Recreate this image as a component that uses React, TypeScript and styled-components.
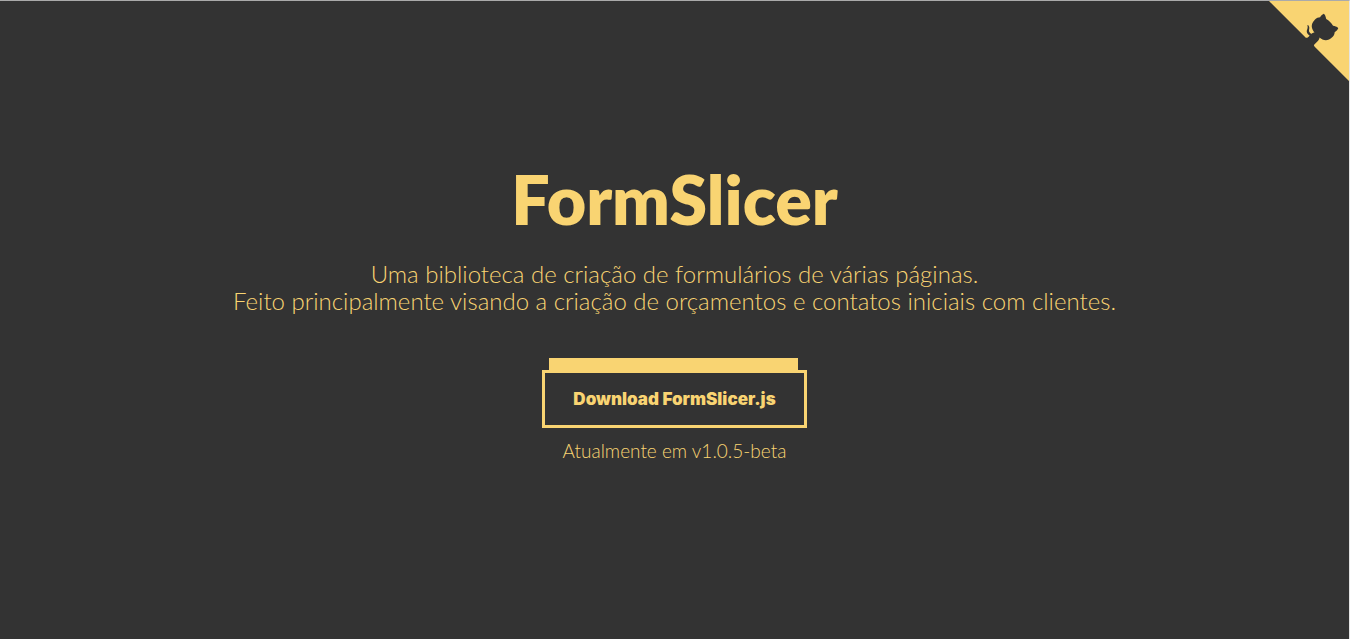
import React from 'react';
import styled, { createGlobalStyle } from 'styled-components';

const ink = '#f9d472';
const paper = '#333333';

const GlobalStyle = createGlobalStyle`
  * { box-sizing: border-box; }
  body { margin: 0; background: ${paper}; color: ${ink}; font-family: Lato, sans-serif; }
`;

const Page = styled.div`
  position: relative;
  min-height: 100vh;
  border-top: 1px solid #aaa;
  border-right: 1px solid #e4e4e4;
  display: flex;
  flex-direction: column;
`;

const Corner = styled.a`
  position: absolute;
  top: 0;
  right: 0;
  color: ${paper};
  svg { display: block; fill: ${ink}; }
`;

const Hero = styled.main`
  flex: 1;
  display: flex;
  flex-direction: column;
  align-items: center;
  justify-content: center;
  padding: 0 16px 18px;
  text-align: center;
`;

const Title = styled.h1`
  margin: 0 0 22px;
  font-size: 68px;
  line-height: 78px;
  font-weight: 800;
`;

const Lead = styled.p`
  margin: 0 0 56px;
  font-size: 24px;
  line-height: 27px;
  font-weight: 300;
`;

const DownloadButton = styled.button`
  position: relative;
  height: 58px;
  padding: 0 28px;
  border: 3px solid ${ink};
  background: ${paper};
  color: ${ink};
  font: 900 17px Inter, sans-serif;
  cursor: pointer;
  &::before {
    content: "";
    position: absolute;
    left: 4px;
    right: 6px;
    top: -15px;
    height: 12px;
    background: ${ink};
  }
`;

const Version = styled.p`
  margin: 11px 0 0;
  font-size: 19px;
  line-height: 24px;
  font-weight: 300;
`;

export default function App() {
  return (
    <Page>
      <GlobalStyle />
      <Corner href="#github" aria-label="GitHub">
        <svg width="80" height="80" viewBox="0 0 250 250" aria-hidden="true">
          <path d="M0,0 L115,115 L130,115 L142,142 L250,250 L250,0 Z" />
          <path d="M128.3,109.0 C113.8,99.7 119.0,89.6 119.0,89.6 C122.0,82.7 120.5,78.6 120.5,78.6 C119.2,72.0 123.4,76.3 123.4,76.3 C127.3,80.9 125.5,87.3 125.5,87.3 C122.9,97.6 130.6,101.9 134.4,103.2" fill="currentColor" />
          <path d="M115.0,115.0 C114.9,115.1 118.7,116.5 119.8,115.4 L133.7,101.6 C136.9,99.2 139.9,98.4 142.2,98.6 C133.8,88.0 127.5,74.4 143.8,58.0 C148.5,53.4 154.0,51.2 159.7,51.0 C160.3,49.4 163.2,43.6 171.4,40.1 C171.4,40.1 176.1,42.5 178.8,56.2 C183.1,58.6 187.2,61.8 190.9,65.4 C194.5,69.0 197.7,73.2 200.1,77.6 C213.8,80.2 216.3,84.9 216.3,84.9 C212.7,93.1 206.9,96.0 205.4,96.6 C205.1,102.4 203.0,107.8 198.3,112.5 C181.9,128.9 168.3,122.5 157.7,114.1 C157.9,116.9 156.7,120.9 152.7,124.9 L141.0,136.5 C139.8,137.7 141.6,141.9 141.8,141.8 Z" fill="currentColor" />
        </svg>
      </Corner>
      <Hero>
        <Title>FormSlicer</Title>
        <Lead>
          Uma biblioteca de criação de formulários de várias páginas.
          <br />
          Feito principalmente visando a criação de orçamentos e contatos iniciais com clientes.
        </Lead>
        <DownloadButton type="button">Download FormSlicer.js</DownloadButton>
        <Version>Atualmente em v1.0.5-beta</Version>
      </Hero>
    </Page>
  );
}
